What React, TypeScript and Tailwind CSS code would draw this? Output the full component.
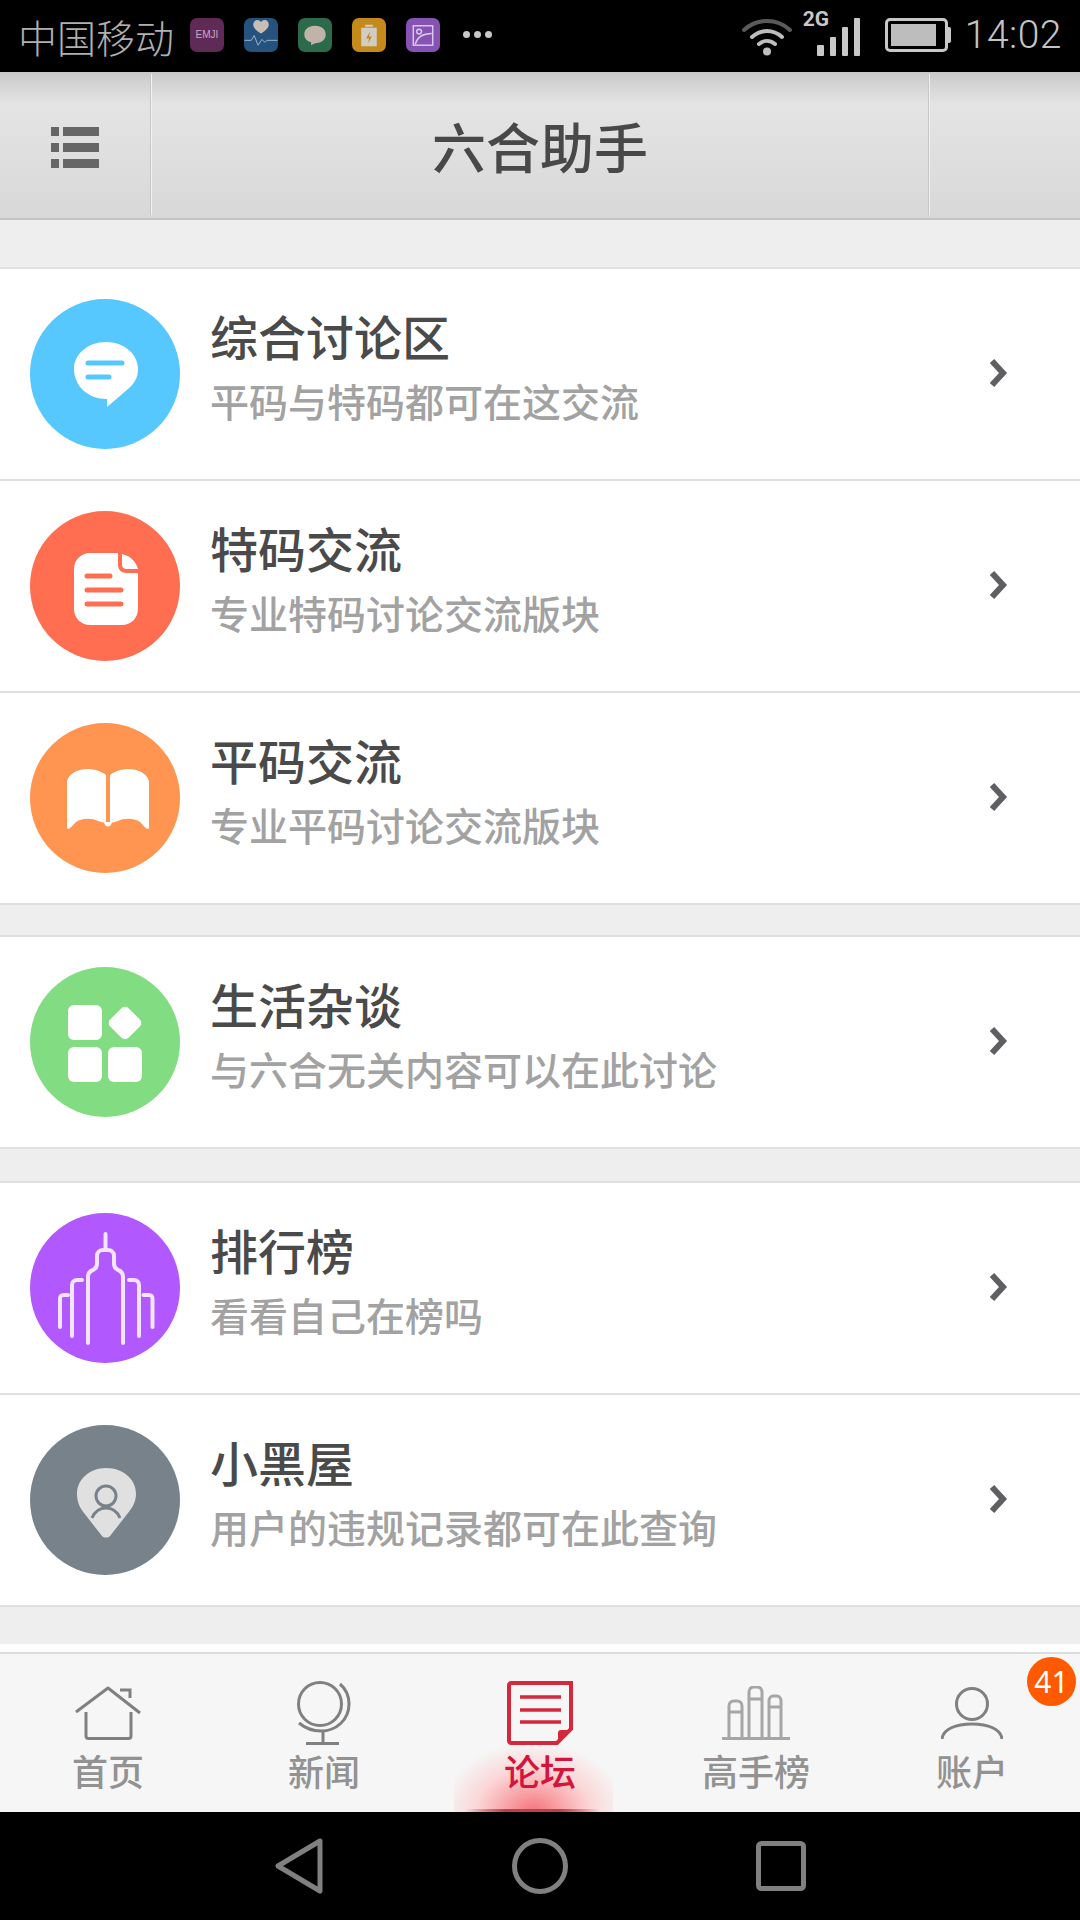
const CJK = 'font-["Noto_Sans_CJK_SC","Noto_Sans",sans-serif]';

const ChatIcon = () => (
    <svg viewBox="30 0 150 150" className="w-[150px] h-[150px]">
        <path d="M106 43c18 0 32 12 32 27 0 9-4 15-10 20l-21 18v-8c-19 0-33-13-33-30 0-15 14-27 32-27z" fill="#fff" />
        <path d="M88 64h34M88 78h21" stroke="#56c8fd" strokeWidth="5" strokeLinecap="round" />
    </svg>
);

const DocIcon = () => (
    <svg viewBox="30 0 150 150" className="w-[150px] h-[150px]">
        <path d="M90 42h28v12c0 5 4 8 8 8h12v36c0 9-7 16-16 16H90c-9 0-16-7-16-16V58c0-9 7-16 16-16z" fill="#fff" />
        <path d="M122 43c9 2 14 8 16 15h-12c-2 0-4-2-4-4z" fill="#fff" />
        <path d="M87 65h23M87 79h34M87 93h34" stroke="#ff6e50" strokeWidth="5" strokeLinecap="round" />
    </svg>
);

const BookIcon = () => (
    <svg viewBox="30 0 150 150" className="w-[150px] h-[150px]">
        <path d="M67 58c2-8 12-12 20-12 7 0 14 2 19 6v48c-4-1-6-1-8-2-6-3-16-3-22 1-3 3-6 7-8 7-1 0-1-1-1-3z" fill="#fff" />
        <path d="M149 58c-2-8-12-12-20-12-7 0-14 2-19 6v48c4-1 6-1 8-2 6-3 16-3 22 1 3 3 6 7 8 7 1 0 1-1 1-3z" fill="#fff" />
        <path d="M104 99c1 6 7 6 8 0z" fill="#fff" />
    </svg>
);

const AppsIcon = () => (
    <svg viewBox="30 0 150 150" className="w-[150px] h-[150px]">
        <rect x="68" y="38" width="34" height="35" rx="6" fill="#fff" />
        <rect x="68" y="80" width="34" height="35" rx="6" fill="#fff" />
        <rect x="108" y="80" width="34" height="35" rx="6" fill="#fff" />
        <rect x="112" y="43" width="26" height="26" rx="5" fill="#fff" transform="rotate(45 125 56)" />
    </svg>
);

const CityIcon = () => (
    <svg viewBox="30 0 150 150" className="w-[150px] h-[150px]" fill="none" stroke="#f1e4ff" strokeWidth="4" strokeLinecap="round" strokeLinejoin="round">
        <path d="M88 130V64c0-4 2-6 5-7 2-1 4-2 4-6v-8c0-4 3-6 6-6h5c3 0 6 2 6 6v8c0 4 2 5 4 6 3 1 5 3 5 7v66" />
        <path d="M105.500 36V21" />
        <path d="M72 123V72c0-3 2-5 5-5h5" />
        <path d="M60 114V86c0-3 1-4 4-4h4" />
        <path d="M139 123V72c0-3-2-5-5-5h-5" />
        <path d="M152.500 114V86c0-3-1-4-4-4h-5" />
    </svg>
);

const PinIcon = () => (
    <svg viewBox="30 0 150 150" className="w-[150px] h-[150px]">
        <path d="M106 43c17 0 30 11 30 26 0 7-3 13-8 19l-18 23c-2 2-6 2-8 0L84 88c-4-5-7-11-7-19 0-15 13-26 29-26z" fill="#e0e0e0" />
        <circle cx="106" cy="71" r="10" fill="none" stroke="#78828a" strokeWidth="3" />
        <path d="M92 93c3-7 8-10 14-10s11 3 14 10" fill="none" stroke="#78828a" strokeWidth="3" />
    </svg>
);

const Chevron = () => (
    <svg viewBox="0 0 20 30" className="w-[20px] h-[30px] mb-[3px]">
        <path d="M4 3l11 12L4 27" fill="none" stroke="#5f5f63" strokeWidth="6" />
    </svg>
);

const ForumRow = ({ color, title, sub, icon }: { color: string; title: string; sub: string; icon: React.ReactNode }) => (
    <div className="flex items-center h-[212px] pl-[30px] pr-[72px] bg-white border-b-2 border-[#e0e0e4]">
        <div className={`w-[150px] h-[150px] rounded-full shrink-0 overflow-hidden ${color}`}>{icon}</div>
        <div className="flex-1 ml-[30px] flex flex-col -mt-[19px]">
            <div className="text-[48px] leading-[62px] font-medium text-[#4a4a4a]">{title}</div>
            <div className="text-[39px] leading-[52px] font-medium text-[#a2a2a2] mt-[8px]">{sub}</div>
        </div>
        <Chevron />
    </div>
);

const TabHome = () => (
    <svg viewBox="0 0 66 54" className="w-[66px] h-[54px]" fill="none" stroke="#808080" strokeWidth="3">
        <path d="M1 26L33 2l32 25" strokeLinejoin="round" />
        <path d="M45 4h10v8" />
        <path d="M11 26v24c0 1.500 1 2.500 2.500 2.500h40c1.500 0 2.500-1 2.500-2.500V26" />
    </svg>
);
const TabGlobe = () => (
    <svg viewBox="0 0 54 64" className="w-[54px] h-[64px]" fill="none" stroke="#808080" strokeWidth="3">
        <circle cx="23" cy="23" r="21.500" />
        <path d="M43 3c7 6 9 13 9 20 0 16-13 27-28 27-9 0-16-3-22-8" />
        <path d="M26 50v12M9 62.500h33" />
    </svg>
);
const TabForum = () => (
    <svg viewBox="0 0 66 64" className="w-[66px] h-[64px]" fill="none" stroke="#d4283c" strokeWidth="4">
        <path d="M4 2h60v46L50 62H4c-1 0-2-1-2-2V4c0-1 1-2 2-2z" />
        <path d="M13 16h41M13 29h41M13 41h41" strokeWidth="3.500" />
        <path d="M51 62V52c0-2 1-3 3-3h10z" fill="#d4283c" stroke="none" />
    </svg>
);
const TabBooks = () => (
    <svg viewBox="0 0 68 54" className="w-[68px] h-[54px]" fill="none" stroke="#a6a6a6" strokeWidth="3">
        <path d="M7 52V20c0-3 2-5 5-5h3c3 0 5 2 5 5v32M7 26h13" />
        <path d="M27 52V6c0-3 2-5 5-5h3c3 0 5 2 5 5v46M27 13h13" />
        <path d="M47 52V15c0-3 2-5 4-5h4c2 0 4 2 4 5v37M47 21h12" />
        <path d="M0 52.500h68" />
    </svg>
);
const TabUser = () => (
    <svg viewBox="0 0 62 52" className="w-[62px] h-[52px]" fill="none" stroke="#808080" strokeWidth="3">
        <circle cx="31" cy="17" r="15.500" />
        <path d="M1 52c1-10 14-15 30-15s29 5 30 15" />
    </svg>
);

const TabItem = ({ label, icon, active }: { label: string; icon: React.ReactNode; active?: boolean }) => (
    <div className="flex-1 flex flex-col items-center">
        <div className="h-[64px] flex items-center justify-center">{icon}</div>
        <div className={`text-[36px] leading-[46px] mt-[2px] font-medium ${active ? 'text-[#d4143a]' : 'text-[#929292]'}`}>{label}</div>
    </div>
);

const StatusApp = ({ color, children }: { color: string; children: React.ReactNode }) => (
    <div className={`w-[34px] h-[34px] rounded-[7px] flex items-center justify-center overflow-hidden ${color}`}>{children}</div>
);

const HeaderDivider = () => (
    <div className="w-[2px] mt-[2px] mb-[3px] bg-[linear-gradient(to_right,#c6c6c6_50%,#f2f2f2_50%)]" />
);

export default function App() {
    return (
        <div className={`w-[1080px] h-[1920px] flex flex-col bg-[#eeeeee] overflow-hidden ${CJK}`}>
            {/* Status bar */}
            <div className="h-[72px] bg-black flex items-center pl-[18px] pr-[18px] shrink-0">
                <span className="text-[39px] leading-[72px] font-light text-[#b0b0b0] -mt-[1px] w-[172px]">中国移动</span>
                <div className="flex items-center gap-[20px] -mt-[3px]">
                    <StatusApp color="bg-[#5f2a56]">
                        <span className="text-[10px] leading-none text-[#c9a9c4] font-['Liberation_Sans',sans-serif]">EMJI</span>
                    </StatusApp>
                    <StatusApp color="bg-[#26527e]">
                        <svg viewBox="0 0 34 35" className="w-[34px] h-[34px]">
                            <path d="M17 16c-5-3-8-6-8-9 0-3 2-5 4-5 2 0 3 1 4 2 1-1 2-2 4-2 2 0 4 2 4 5 0 3-3 6-8 9z" fill="#c9bdb5" />
                            <path d="M0 23h7l3-5 4 10 4-6 3 3 2-2h11" fill="none" stroke="#9db6c9" strokeWidth="1" />
                        </svg>
                    </StatusApp>
                    <StatusApp color="bg-[#2b6a4b]">
                        <svg viewBox="0 0 34 35" className="w-[34px] h-[34px]">
                            <path d="M17 8c7 0 11 4 11 9 0 5-4 9-11 9l-4 2v-3c-4-1-7-4-7-8 0-5 4-9 11-9z" fill="#c0b4aa" />
                        </svg>
                    </StatusApp>
                    <StatusApp color="bg-[#c68a1c]">
                        <svg viewBox="0 0 34 35" className="w-[34px] h-[34px]">
                            <path d="M9 10h16v19H9z" fill="#d0cdc5" />
                            <path d="M13 7h8v2h-8z" fill="#d0cdc5" />
                            <path d="M18 14l-4 7h3l-1 5 4-7h-3z" fill="#c68a1c" />
                        </svg>
                    </StatusApp>
                    <StatusApp color="bg-[#8652b4]">
                        <svg viewBox="0 0 34 35" className="w-[34px] h-[34px]" fill="none" stroke="#d8cbe6" strokeWidth="1.500">
                            <rect x="7" y="8" width="20" height="20" />
                            <circle cx="13" cy="14" r="2.500" />
                            <path d="M9 27c2-7 8-11 17-11" />
                        </svg>
                    </StatusApp>
                </div>
                <div className="flex gap-[4px] ml-[23px] -mt-[3px]">
                    <span className="w-[7px] h-[7px] rounded-full bg-[#c8c8c8]" />
                    <span className="w-[7px] h-[7px] rounded-full bg-[#c8c8c8]" />
                    <span className="w-[7px] h-[7px] rounded-full bg-[#c8c8c8]" />
                </div>
                <div className="flex-1" />
                <svg viewBox="0 0 50 39" className="w-[50px] h-[39px]">
                    <path d="M2 13c13-12 33-12 46 0" fill="none" stroke="#5a5a5a" strokeWidth="4" strokeLinecap="round" />
                    <path d="M10 20c9-8 21-8 30 0" fill="none" stroke="#bdbdbd" strokeWidth="4" strokeLinecap="round" />
                    <path d="M17 27c5-4 11-4 16 0" fill="none" stroke="#bdbdbd" strokeWidth="4" strokeLinecap="round" />
                    <circle cx="25" cy="34.500" r="4" fill="#bdbdbd" />
                </svg>
                <div className="relative w-[43px] h-[39px] ml-[25px]">
                    <span className="absolute left-[-14px] top-[-8px] text-[21px] leading-[20px] font-bold text-[#c8c8c8] font-['Roboto',sans-serif]">2G</span>
                    <div className="absolute inset-0 flex items-end justify-between">
                        <span className="w-[7px] h-[11px] rounded-[1px] bg-[#c8c8c8]" />
                        <span className="w-[6px] h-[19px] rounded-[1px] bg-[#c8c8c8]" />
                        <span className="w-[6px] h-[29px] rounded-[1px] bg-[#c8c8c8]" />
                        <span className="w-[6px] h-[38px] rounded-[1px] bg-[#c8c8c8]" />
                    </div>
                </div>
                <div className="flex items-center ml-[25px] -mt-[2px]">
                    <div className="w-[63px] h-[34px] border-[3px] border-[#c8c8c8] rounded-[5px] p-[3px]">
                        <div className="w-[45px] h-full bg-[#bdbdbd]" />
                    </div>
                    <div className="w-[3px] h-[16px] bg-[#c8c8c8] rounded-r-[2px]" />
                </div>
                <span className="ml-[14px] text-[39px] leading-[72px] font-light tracking-[0.5px] text-[#c4c4c4] -mt-[3px] font-['Roboto',sans-serif]">14:02</span>
            </div>

            {/* Header */}
            <div className="h-[148px] shrink-0 flex border-b-2 border-[#c4c4c4] bg-[linear-gradient(#c9c9c9_0px,#e4e4e4_32px,#d8d8d8_100%)]">
                <div className="w-[150px] flex items-center justify-center flex-col gap-[7px] pt-[5px]">
                    {[0, 1, 2].map(i => (
                        <div key={i} className="flex gap-[4px]">
                            <div className="w-[8px] h-[9px] bg-[#666]" />
                            <div className="w-[36px] h-[9px] bg-[#666]" />
                        </div>
                    ))}
                </div>
                <HeaderDivider />
                <div className="flex-1 flex items-center justify-center">
                    <span className="text-[54px] leading-none font-medium text-[#484848] mt-[1px]">六合助手</span>
                </div>
                <HeaderDivider />
                <div className="w-[150px]" />
            </div>

            {/* Forum sections */}
            <div className="h-[47px] shrink-0" />
            <div className="border-t-2 border-[#e0e0e4]">
                <ForumRow color="bg-[#56c8fd]" title="综合讨论区" sub="平码与特码都可在这交流" icon={<ChatIcon />} />
                <ForumRow color="bg-[#ff6e50]" title="特码交流" sub="专业特码讨论交流版块" icon={<DocIcon />} />
                <ForumRow color="bg-[#ff9550]" title="平码交流" sub="专业平码讨论交流版块" icon={<BookIcon />} />
            </div>
            <div className="h-[30px] shrink-0" />
            <div className="border-t-2 border-[#e0e0e4]">
                <ForumRow color="bg-[#82dc82]" title="生活杂谈" sub="与六合无关内容可以在此讨论" icon={<AppsIcon />} />
            </div>
            <div className="h-[32px] shrink-0" />
            <div className="border-t-2 border-[#e0e0e4]">
                <ForumRow color="bg-[#b159ff]" title="排行榜" sub="看看自己在榜吗" icon={<CityIcon />} />
                <ForumRow color="bg-[#78828a]" title="小黑屋" sub="用户的违规记录都可在此查询" icon={<PinIcon />} />
            </div>
            <div className="flex-1" />

            {/* Tab bar */}
            <div className="h-[8px] bg-white shrink-0" />
            <div className="relative h-[160px] shrink-0 bg-[#f6f6f6] border-t-2 border-[#dcdcdc] flex pt-[27px] overflow-hidden">
                <div className="absolute left-[454px] bottom-0 w-[159px] h-[72px] bg-[radial-gradient(ellipse_92px_70px_at_50%_100%,#f4737b_0%,#f8a4a8_30%,#fbd6d7_62%,#f6f6f600_100%)]" />
                <div className="absolute left-[465px] bottom-0 w-[135px] h-[3px] bg-[linear-gradient(to_right,#d8556000,#b8434c_30%,#b8434c_70%,#d8556000)]" />
                <div className="relative flex w-full">
                    <TabItem label="首页" icon={<TabHome />} />
                    <TabItem label="新闻" icon={<TabGlobe />} />
                    <TabItem label="论坛" icon={<TabForum />} active />
                    <TabItem label="高手榜" icon={<TabBooks />} />
                    <TabItem label="账户" icon={<TabUser />} />
                </div>
                <div className="absolute right-[4px] top-[3px] w-[49px] h-[49px] rounded-full bg-[#ff5a00] flex items-center justify-center text-white text-[30px] leading-none font-['Noto_Sans',sans-serif]">41</div>
            </div>

            {/* Nav bar */}
            <div className="h-[108px] shrink-0 bg-black flex items-center justify-center">
                <svg viewBox="0 0 50 58" className="w-[50px] h-[58px]">
                    <path d="M46 4L4 29l42 25z" fill="none" stroke="#808080" strokeWidth="5" strokeLinejoin="round" />
                </svg>
                <svg viewBox="0 0 56 56" className="w-[56px] h-[56px] ml-[188px]">
                    <circle cx="28" cy="28" r="25.500" fill="none" stroke="#808080" strokeWidth="5" />
                </svg>
                <svg viewBox="0 0 50 50" className="w-[50px] h-[50px] ml-[188px]">
                    <rect x="2.500" y="2.500" width="45" height="45" rx="3" fill="none" stroke="#808080" strokeWidth="5" />
                </svg>
            </div>
        </div>
    );
}
